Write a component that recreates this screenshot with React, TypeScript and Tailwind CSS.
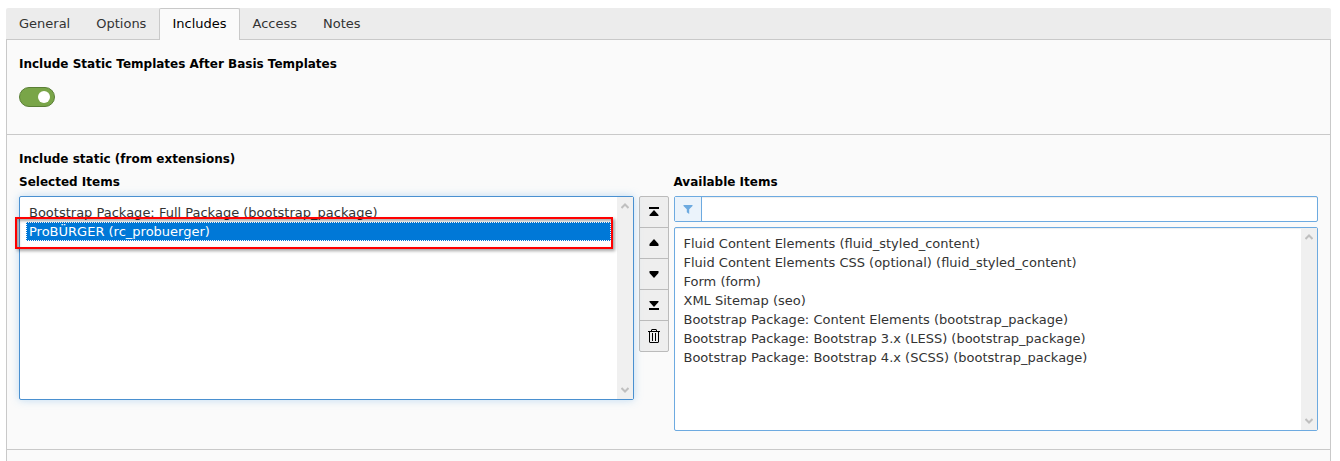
import { useState } from "react";
import type { ReactNode } from "react";

const tabs = ["General", "Options", "Includes", "Access", "Notes"];

const selectedItems = [
  "Bootstrap Package: Full Package (bootstrap_package)",
  "ProBÜRGER (rc_probuerger)",
];

const availableItems = [
  "Fluid Content Elements (fluid_styled_content)",
  "Fluid Content Elements CSS (optional) (fluid_styled_content)",
  "Form (form)",
  "XML Sitemap (seo)",
  "Bootstrap Package: Content Elements (bootstrap_package)",
  "Bootstrap Package: Bootstrap 3.x (LESS) (bootstrap_package)",
  "Bootstrap Package: Bootstrap 4.x (SCSS) (bootstrap_package)",
];

function Chevron({ down = false }: { down?: boolean }) {
  return (
    <svg width="8" height="6" viewBox="0 0 8 6" aria-hidden="true">
      <path
        d={down ? "M.5 1 4 4.5 7.5 1" : "M.5 5 4 1.5 7.5 5"}
        fill="none"
        stroke="#bfbfbf"
        strokeWidth="2"
      />
    </svg>
  );
}

function ScrollTrack() {
  return (
    <div className="flex w-4 shrink-0 flex-col items-center justify-between bg-[#f0f0f0] py-[6px]">
      <Chevron />
      <Chevron down />
    </div>
  );
}

type ListProps = {
  id: string;
  items: string[];
  value?: string[];
  onChange?: (values: string[]) => void;
};

function ItemList({ id, items, value, onChange }: ListProps) {
  return (
    <>
      <select
        id={id}
        multiple
        size={10}
        value={value}
        onChange={(e) =>
          onChange?.(Array.from(e.target.selectedOptions, (o) => o.value))
        }
        className="min-w-0 flex-1 appearance-none overflow-hidden bg-transparent p-[6px] text-[13px] text-[#333] outline-none"
      >
        {items.map((item) => (
          <option
            key={item}
            value={item}
            className="h-[19px] min-h-0 border border-transparent px-[2px] pt-px pb-0 leading-4 checked:border-dotted checked:border-white! checked:bg-[linear-gradient(#0078d7,#0078d7)] checked:text-white!"
          >
            {item}
          </option>
        ))}
      </select>
      <ScrollTrack />
    </>
  );
}

const moveIcons: { label: string; icon: ReactNode }[] = [
  {
    label: "Move to top",
    icon: (
      <>
        <path d="M3 3h10v2H3z" />
        <path d="M8 6l4.5 5v1h-9v-1z" />
      </>
    ),
  },
  { label: "Move up", icon: <path d="M8 4l4.5 5v2h-9V9z" /> },
  { label: "Move down", icon: <path d="M8 12l4.5-5V5h-9v2z" /> },
  {
    label: "Move to bottom",
    icon: (
      <>
        <path d="M8 10l4.5-5V4h-9v1z" />
        <path d="M3 11h10v2H3z" />
      </>
    ),
  },
  {
    label: "Delete",
    icon: (
      <>
        <path d="M5 3V2l1-1h4l1 1v1h3v1H2V3zM6 2v1h4V2z" fillRule="evenodd" />
        <path d="M3 4h1v10h8V4h1v10l-1 1H4l-1-1z" />
        <path d="M6 5h1v8H6zM9 5h1v8H9z" />
      </>
    ),
  },
];

export default function App() {
  const [active, setActive] = useState("Includes");
  const [enabled, setEnabled] = useState(true);
  const [picked, setPicked] = useState([selectedItems[1]]);
  const [filter, setFilter] = useState("");

  return (
    <main className="flex min-h-screen flex-col bg-white pt-2 pr-[9px] pl-[6px] font-['DejaVu_Sans',sans-serif] text-[12px] leading-[18px] text-black">
      <nav
        role="tablist"
        className="flex h-8 rounded-t-[2px] border-b border-[#c9c9c9] bg-[#ececec]"
      >
        {tabs.map((tab) => (
          <button
            key={tab}
            type="button"
            role="tab"
            aria-selected={tab === active}
            onClick={() => setActive(tab)}
            className={
              tab === active
                ? "h-8 rounded-t-[2px] border border-b-0 border-[#c9c9c9] bg-[#fafafa] px-3 pb-[2px] text-[13px] text-black"
                : "h-8 border border-b-0 border-transparent px-3 pb-[2px] text-[13px] text-[#333]"
            }
          >
            {tab}
          </button>
        ))}
      </nav>

      <div className="grow border-x border-[#c9c9c9] bg-[#fafafa]">
        <section className="border-b border-[#c9c9c9] px-3 pt-[15px] pb-[27px]">
          <label htmlFor="after-basis" className="block font-bold">
            Include Static Templates After Basis Templates
          </label>
          <div className="mt-[14px] flex">
            <input
              id="after-basis"
              type="checkbox"
              role="switch"
              checked={enabled}
              onChange={(e) => setEnabled(e.target.checked)}
              className="h-5 w-9 appearance-none rounded-full border border-[#5a7f36] bg-[#79a548] px-1 py-[3px] before:block before:size-3 before:rounded-full before:bg-white checked:before:ml-auto not-checked:bg-[#999]"
            />
          </div>
        </section>

        <section className="border-b border-[#c9c9c9] px-3 pt-[15px] pb-[18px]">
          <h2 className="font-bold">Include static (from extensions)</h2>
          <div className="mt-[5px] flex">
            <div className="w-1/2">
              <label htmlFor="selected" className="block font-bold">
                Selected Items
              </label>
              <div className="mt-[5px] flex items-start gap-[5px]">
                <div className="relative flex min-w-0 flex-1 rounded-[2px] border border-[#4a90d0] bg-white shadow-[0_0_8px_rgba(102,175,233,0.4)]">
                  <ItemList
                    id="selected"
                    items={selectedItems}
                    value={picked}
                    onChange={setPicked}
                  />
                  <div className="pointer-events-none absolute top-5 right-5 -left-[5px] h-8 border-2 border-[#ff0000] shadow-[2px_2px_3px_rgba(0,0,0,0.35),inset_2px_2px_3px_rgba(0,0,0,0.35)]" />
                </div>
                <div className="flex w-[30px] flex-col rounded-[2px] border border-[#bbb] bg-[#eee]">
                  {moveIcons.map(({ label, icon }) => (
                    <button
                      key={label}
                      type="button"
                      aria-label={label}
                      className="flex h-[31px] items-center justify-center border-b border-[#bbb] last:h-[30px] last:border-b-0"
                    >
                      <svg width="16" height="16" viewBox="0 0 16 16">
                        {icon}
                      </svg>
                    </button>
                  ))}
                </div>
              </div>
            </div>

            <div className="w-1/2 pl-[5px]">
              <label htmlFor="available" className="block font-bold">
                Available Items
              </label>
              <div className="mt-[5px] flex h-[26px] rounded-[2px] border border-[#6daae0] bg-white">
                <label
                  htmlFor="filter"
                  aria-label="Filter items"
                  className="flex w-[27px] items-center justify-center border-r border-[#6daae0] bg-[#ebf3fb]"
                >
                  <svg width="10" height="10" viewBox="0 0 10 10">
                    <path d="M.5 1h9v1L6.2 5.3V10L3.8 8.2V5.3L.5 2z" fill="#6daae0" />
                  </svg>
                </label>
                <input
                  id="filter"
                  type="text"
                  value={filter}
                  onChange={(e) => setFilter(e.target.value)}
                  className="min-w-0 flex-1 px-2 shadow-[inset_0_1px_1px_rgba(0,0,0,0.07)] outline-none"
                />
              </div>
              <div className="mt-[5px] flex rounded-[2px] border border-[#6daae0] bg-white shadow-[inset_0_1px_1px_rgba(0,0,0,0.07)]">
                <ItemList
                  id="available"
                  items={availableItems.filter((item) =>
                    item.toLowerCase().includes(filter.toLowerCase()),
                  )}
                />
              </div>
            </div>
          </div>
        </section>
      </div>
    </main>
  );
}
